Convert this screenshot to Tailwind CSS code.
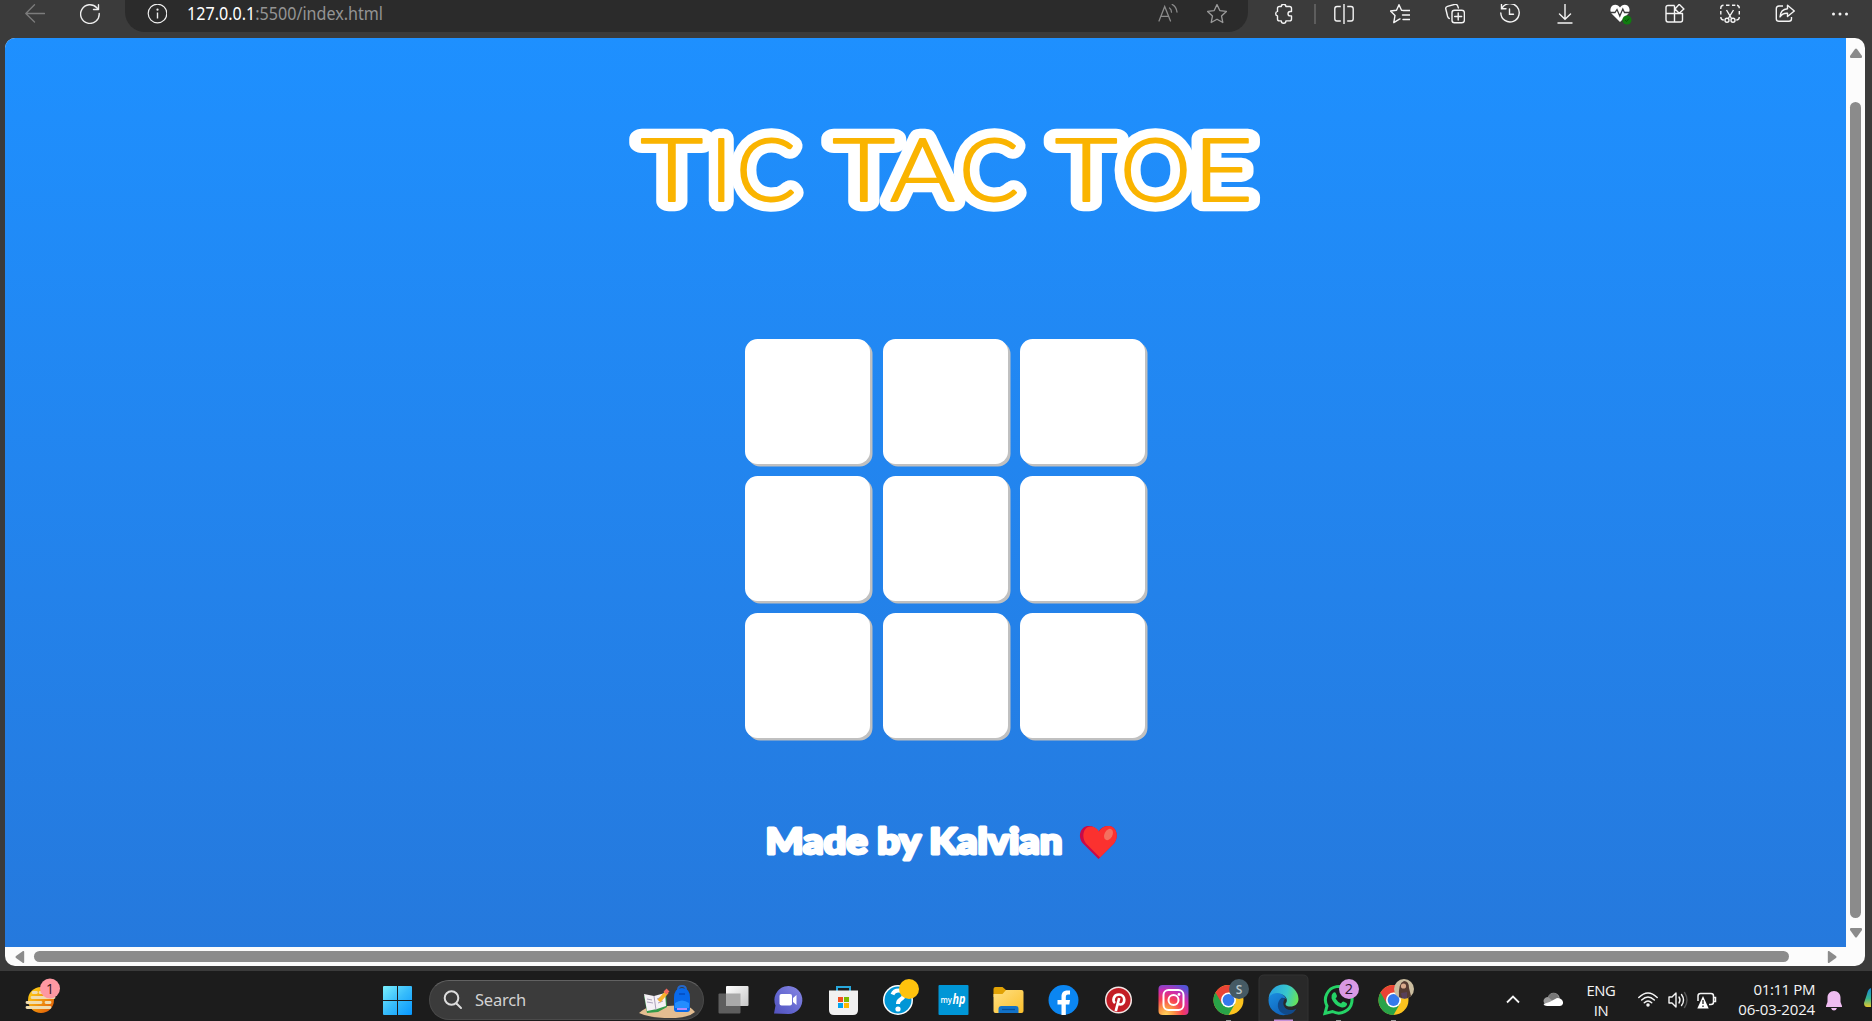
<!DOCTYPE html>
<html lang="en">
<head>
<meta charset="utf-8">
<title>Tic Tac Toe</title>
<script src="https://cdn.jsdelivr.net/npm/@tailwindcss/browser@4"></script>
</head>
<body class="w-[1872px] h-[1021px] overflow-hidden bg-[#3b3b3b] flex flex-col font-['Open_Sans','Noto_Sans',sans-serif]">

<!-- Browser toolbar -->
<header class="h-[38px] shrink-0 flex text-white">
  <div class="w-[125px] h-[28px] flex items-center pl-[25px] gap-[35px]">
    <svg class="w-5 h-5 shrink-0" viewBox="0 0 20 20" fill="none" stroke="#7c7c7c" stroke-width="1.3" stroke-linecap="round" stroke-linejoin="round"><path d="M19.500 9.500H.8M9.500.8L.8 9.500l8.700 8.500"/></svg>
    <svg class="w-5 h-5 shrink-0" viewBox="0 0 20 20" fill="none" stroke="#eee" stroke-width="1.400" stroke-linecap="round" stroke-linejoin="round"><path d="M19.200 9.500A9.300 9.300 0 1 1 16.800 3.800L18.500 5.500M18.500.8V5.500H13.500"/></svg>
  </div>
  <div class="w-[1123px] h-8 bg-[#2b2b2b] rounded-b-[20px] flex items-start pt-1">
    <svg class="w-5 h-5 ml-[22px] shrink-0" viewBox="0 0 20 20" fill="none" stroke="#eee" stroke-width="1.200"><circle cx="10.500" cy="9.500" r="9.300"/><path d="M10.500 8.500v6" stroke-width="1.400"/><circle cx="10.500" cy="5.700" r=".5"/></svg>
    <svg class="w-[200px] h-6 ml-[20px] -mt-[1px] overflow-visible" viewBox="0 0 200 24" font-family="Noto Sans, sans-serif" font-size="17.500"><text x="0" y="17" textLength="196" lengthAdjust="spacingAndGlyphs" fill="#949494"><tspan fill="#fff">127.0.0.1</tspan>:5500/index.html</text></svg>
    <svg class="w-5 h-5 ml-auto shrink-0" viewBox="0 0 20 20" fill="none" stroke="#8b8b8b" stroke-width="1.300" stroke-linecap="round"><path d="M1 17L6.700 2.500 12.500 17M3 12.300h7.500M11.500 4c1.300.8 2 2.500 2 4.200M14.200.5c3 1.500 4.300 4 4.800 7.500"/></svg>
    <svg class="w-5 h-5 ml-[29px] mr-[21px] shrink-0" viewBox="0 0 20 20" fill="none" stroke="#9a9a9a" stroke-width="1.300" stroke-linejoin="round"><path d="M10 .6l2.800 6 6.600.8-4.900 4.500 1.300 6.600-5.800-3.300-5.800 3.300 1.300-6.600L.6 7.400l6.600-.8z"/></svg>
  </div>
  <div class="flex h-[28px] items-center">
    <svg class="w-5 h-5 ml-[26px]" viewBox="0 0 20 20" fill="none" stroke="#f4f4f4" stroke-width="1.400" stroke-linejoin="round"><path d="M5.500 2.500h1.800a2.300 2.300 0 0 1 4.600 0h3.600q2 0 2 2v3h-1.300a2.200 2.200 0 0 0 0 4.400h1.300v3q0 2-2 2h-3.600a2.300 2.300 0 0 1-4.600 0H5.500q-2 0-2-2v-3a2.300 2.300 0 0 1 0-4.500v-3q0-2 2-2z"/></svg>
    <div class="w-[2px] h-5 bg-[#5d5d5d] ml-[20px]"></div>
    <svg class="w-5 h-5 ml-[18px]" viewBox="0 0 20 20" fill="none" stroke="#f4f4f4" stroke-width="1.400"><path d="M10 0v20M6.800 2.500H3Q.8 2.500.8 4.700v10Q.8 17 3 17h3.800M13.200 2.500H17q2.200 0 2.200 2.200v10Q19.200 17 17 17h-3.800"/></svg>
    <div class="flex gap-[35px] ml-[36px]">
      <svg class="w-5 h-5" viewBox="0 0 20 20" fill="none" stroke="#f4f4f4" stroke-width="1.400" stroke-linejoin="round" stroke-linecap="round"><path d="M12.500 6.400l-1-.2L9 .7l-2.500 5.500-6 .8 4.500 4.400-1.200 7.200L9 15.400l1-.5M13 6.500h7M12.500 11H20M13 15.500h7"/></svg>
      <svg class="w-5 h-5" viewBox="0 0 20 20" fill="none" stroke="#f4f4f4" stroke-width="1.400" stroke-linecap="round"><path d="M4.300 14.500C3 14 2.800 13 2.500 12L.8 5Q.3 3 2.500 2.300l7.500-2Q12 0 12.700 2l.7 2M10 .4"/><rect x="7" y="6.200" width="12.400" height="12.600" rx="2.500"/><path d="M13.200 9v7M9.700 12.500h7"/></svg>
      <svg class="w-5 h-5" viewBox="0 0 20 20" fill="none" stroke="#f4f4f4" stroke-width="1.400" stroke-linecap="round"><path d="M2 4.200A9.200 9.200 0 1 1 .8 9M1.500.3v4.500H6M9.500 5v5.300h4"/></svg>
      <svg class="w-5 h-5" viewBox="0 0 20 20" fill="none" stroke="#f4f4f4" stroke-width="1.400" stroke-linecap="round"><path d="M10 .3V15M4.500 10l5.500 5.300L15.500 10M3 19h14"/></svg>
      <svg class="w-5 h-5 overflow-visible" viewBox="0 0 20 20" fill="none"><path d="M10 18L1.500 9.500C-1 6 1 .8 5.300.8c2 0 3.700 1.200 4.700 2.700C11 2 12.700.8 14.700.8 19 .8 21 6 18.500 9.500z" fill="#fff"/><path d="M0 8.500h5l2-3 2.800 6.500 3-7 1.700 3.500H20" stroke="#3b3b3b" stroke-width="1.300"/><circle cx="17" cy="16" r="4.600" fill="#107c10"/><path d="M15 16l1.500 1.500 2.500-3" stroke="#0b4c0b" stroke-width="1"/></svg>
      <svg class="w-5 h-5" viewBox="0 0 20 20" fill="none" stroke="#f4f4f4" stroke-width="1.400" stroke-linejoin="round"><path d="M9.500 1.500H3Q1 1.500 1 3.500v12Q1 18 3 18h12.500q2 0 2-2v-6.500H1M9.500 1.500V18M14.200.3l4.700 4.700-4.700 4.200L10 5z"/></svg>
      <svg class="w-5 h-5" viewBox="0 0 20 20" fill="none" stroke="#f4f4f4" stroke-width="1.400"><path d="M.8 5V4Q.8 1.300 3.500 1.300M6 1.300h3.500M12 1.300h3.300M17 1.300q2.300.4 2.300 3M19.300 7v3.500M19.300 13q0 3-3 3M.8 7v3.500M.8 13q0 3 3 3M6.500 6l5.300 9M13.500 6L8 15"/><circle cx="7" cy="16.300" r="2"/><circle cx="13" cy="16.300" r="2"/></svg>
      <svg class="w-5 h-5" viewBox="0 0 20 20" fill="none" stroke="#f4f4f4" stroke-width="1.400" stroke-linejoin="round"><path d="M8 2H4Q1.300 2 1.300 4.700v10q0 2.600 2.700 2.600h10q2.500 0 2.500-2.500V13M12.500 1.300L19.300 7l-6.800 5.500V9.300C8.500 9 6.500 10.500 5 13c.3-5 3-8 7.500-8.300z"/></svg>
      <svg class="w-5 h-5" viewBox="0 0 20 20" fill="#f4f4f4"><circle cx="3.500" cy="10" r="1.500"/><circle cx="10" cy="10" r="1.500"/><circle cx="16.500" cy="10" r="1.500"/></svg>
    </div>
  </div>
</header>

<!-- Page viewport with scrollbars -->
<main class="ml-[5px] w-[1860px] h-[928px] shrink-0 rounded-[10px] overflow-hidden bg-[#fcfcfc] grid grid-cols-[1841px_19px] grid-rows-[909px_19px]">
  <section class="bg-linear-to-b from-[#1e90ff] to-[#2579dd] flex flex-col items-center pl-[40px] overflow-hidden">
    <svg class="w-[660px] h-[120px] mt-[72px] shrink-0" viewBox="0 0 660 120" font-family="Lato, sans-serif" font-weight="300" font-size="86.500">
      <defs>
        <g id="title" stroke-linejoin="round">
          <text x="24.500" y="91" textLength="62.500" lengthAdjust="spacingAndGlyphs">T</text>
          <text x="94" y="91">I</text>
          <text x="120" y="91" textLength="60" lengthAdjust="spacingAndGlyphs">C</text>
          <text x="216.500" y="91" textLength="62.500" lengthAdjust="spacingAndGlyphs">T</text>
          <text x="274" y="91" textLength="65" lengthAdjust="spacingAndGlyphs">A</text>
          <text x="343" y="91" textLength="60" lengthAdjust="spacingAndGlyphs">C</text>
          <text x="439" y="91" textLength="62.500" lengthAdjust="spacingAndGlyphs">T</text>
          <text x="504" y="91" textLength="71" lengthAdjust="spacingAndGlyphs">O</text>
          <text x="577" y="91" textLength="60" lengthAdjust="spacingAndGlyphs">E</text>
        </g>
      </defs>
      <use href="#title" fill="#fff" stroke="#fff" stroke-width="20.500"/>
      <use href="#title" fill="#fab400" stroke="#fab400" stroke-width="1.800"/>
    </svg>
    <div class="grid grid-cols-3 gap-x-[12.400px] gap-y-[12.200px] mt-[109px] mr-[1px]">
      <div class="size-[125px] rounded-[12.500px] bg-white shadow-[2.500px_2.500px_0_#c0c0c0]"></div>
      <div class="size-[125px] rounded-[12.500px] bg-white shadow-[2.500px_2.500px_0_#c0c0c0]"></div>
      <div class="size-[125px] rounded-[12.500px] bg-white shadow-[2.500px_2.500px_0_#c0c0c0]"></div>
      <div class="size-[125px] rounded-[12.500px] bg-white shadow-[2.500px_2.500px_0_#c0c0c0]"></div>
      <div class="size-[125px] rounded-[12.500px] bg-white shadow-[2.500px_2.500px_0_#c0c0c0]"></div>
      <div class="size-[125px] rounded-[12.500px] bg-white shadow-[2.500px_2.500px_0_#c0c0c0]"></div>
      <div class="size-[125px] rounded-[12.500px] bg-white shadow-[2.500px_2.500px_0_#c0c0c0]"></div>
      <div class="size-[125px] rounded-[12.500px] bg-white shadow-[2.500px_2.500px_0_#c0c0c0]"></div>
      <div class="size-[125px] rounded-[12.500px] bg-white shadow-[2.500px_2.500px_0_#c0c0c0]"></div>
    </div>
    <svg class="w-[380px] h-[60px] mt-[76px] shrink-0" viewBox="0 0 380 60" fill="#fff" stroke="#fff" stroke-linejoin="round">
      <text x="9.500" y="39.500" font-family="Lato, sans-serif" font-weight="900" font-size="36" stroke-width="3" textLength="297" lengthAdjust="spacingAndGlyphs">Made by Kalvian</text>
      <g stroke="none" transform="translate(4 -1)"><path d="M338.500 46L323 30.500C317 23.500 320.500 13 328.500 13c4.500 0 8 2 10 5.500 2-3.500 5.500-5.500 10-5.500 8 0 11 10.500 5.500 17.500z" fill="#c90a48"/><path d="M340 44.500L327 31.500C320.500 24.500 323.500 13.500 330.500 13.500c4 0 7 2 8.500 5 2-3.500 5-5.500 9.500-5.500 8 0 11 10.500 5.500 17.500z" fill="#fb312f"/><ellipse cx="348.500" cy="21.500" rx="4" ry="6" transform="rotate(27 348.500 21.500)" fill="#f4705f"/></g>
    </svg>
  </section>
  <div class="flex flex-col items-center">
    <svg class="w-3 h-[10px] mt-[10px] shrink-0" viewBox="0 0 12 10" fill="#8b8b8b"><path d="M5 1q1-1 2 0l5 7q.2 2-1 2H1q-1.200 0-1-2z"/></svg>
    <div class="w-[11px] h-[816px] rounded-full bg-[#8b8b8b] mt-[44px] shrink-0"></div>
    <svg class="w-3 h-[10px] mt-[10px] shrink-0" viewBox="0 0 12 10" fill="#8b8b8b"><path d="M5 9q1 1 2 0l5-7q.2-2-1-2H1Q-.2 0 0 2z"/></svg>
  </div>
  <div class="flex items-center">
    <svg class="w-[10px] h-3 ml-[10px] shrink-0" viewBox="0 0 10 12" fill="#8b8b8b"><path d="M1 5q-1 1 0 2l7 5q1.200.2 1.200-1V1q0-1.200-1.200-1z"/></svg>
    <div class="w-[1755px] h-[11px] rounded-full bg-[#8b8b8b] ml-[9px] shrink-0"></div>
    <svg class="w-[10px] h-3 ml-[38px] shrink-0" viewBox="0 0 10 12" fill="#8b8b8b"><path d="M9 5q1 1 0 2l-7 5Q.8 12.200.8 11V1Q.8-.2 2 0z"/></svg>
  </div>
</main>

<!-- Taskbar -->
<footer class="mt-[5px] h-[50px] shrink-0 bg-[#1c1c1c] flex items-start text-[#f4f4f4]">
  <svg class="w-[370px] h-[50px] shrink-0" viewBox="0 0 370 50">
    <defs><linearGradient id="sun" x1="0" y1="0" x2="1" y2="1"><stop offset=".2" stop-color="#fcc111"/><stop offset="1" stop-color="#df5106"/></linearGradient></defs>
    <circle cx="41" cy="29" r="13" fill="url(#sun)"/>
    <path d="M33 21.500h3.500M40 21.500h3M32 26.500h22M27 31.500h14M46 31.500h4M27 36.500h23" stroke="#f0dcae" stroke-width="2.800" stroke-linecap="round"/>
    <circle cx="50" cy="17.500" r="10" fill="#fe98a2"/>
    <text x="50" y="23" text-anchor="middle" font-family="Open Sans, sans-serif" font-size="14" fill="#34161a">1</text>
  </svg>
  <svg class="w-[55px] h-[50px] shrink-0" viewBox="0 0 55 50">
    <defs><linearGradient id="win" gradientUnits="userSpaceOnUse" x1="13" y1="15" x2="42" y2="44"><stop stop-color="#79effc"/><stop offset=".5" stop-color="#37bcfb"/><stop offset="1" stop-color="#0797ff"/></linearGradient></defs>
    <path d="M13 16q0-1 1-1h13v14H13zM28 15h13q1 0 1 1v13H28zM13 30h14v14H14q-1 0-1-1zM28 30h14v13q0 1-1 1H28z" fill="url(#win)"/>
  </svg>
  <div class="ml-[4px] mt-[9px] w-[275px] h-[40px] rounded-full bg-[#3b3b3b] border border-[#4a4a4a] border-t-[#626262] flex items-center shrink-0">
    <svg class="w-5 h-5 ml-[13px]" viewBox="0 0 20 20" fill="none" stroke="#ddd" stroke-width="2" stroke-linecap="round"><circle cx="8.500" cy="8" r="6.800"/><path d="M13.500 13.500l4.500 4.500"/></svg>
    <span class="ml-[12px] text-[16.500px] leading-5 tracking-[-0.2px] text-[#d2d2d2] font-['Noto_Sans',sans-serif]">Search</span>
    <svg class="w-[60px] h-[38px] ml-auto mr-[5px]" viewBox="0 0 60 38">
      <path d="M1 32q6-6 14-6l30-2q6 0 12 7-7 6-24 6-22 0-32-5z" fill="#e3bd91"/>
      <path d="M6 15l12 1 10-4 1 14-9 5-11 1z" fill="#349b4a"/><path d="M6 13l10 2 11-3 1 13-9 3-10 2z" fill="#f5f1f6"/><path d="M16 15l2 14M9 18l5 1M9 21l6 1M19 18l5-2M20 22l5-2" stroke="#aaa1bb"/>
      <path d="M21 20l8-9" stroke="#f7b22b" stroke-width="4"/><path d="M27 12l3-3" stroke="#f4695d" stroke-width="4"/>
      <path d="M40 9q0-4 4-4t4 4" fill="none" stroke="#2567c8" stroke-width="2"/><path d="M36 17q0-10 8-10t8 10v11q0 3-3 3H39q-3 0-3-3z" fill="#0869eb"/><path d="M37 22q7-5 14 0v5H37z" fill="#238dff"/><path d="M39 28h10" stroke="#b18bff" stroke-width="2"/><path d="M41 13h6" stroke="#003da6"/>
    </svg>
  </div>
  <div class="flex ml-[2px] shrink-0">
    <!-- task view -->
    <svg class="w-[55px] h-[50px]" viewBox="0 0 55 50"><defs><linearGradient id="tv" x1="0" y1="0" x2="1" y2="1"><stop stop-color="#fff"/><stop offset="1" stop-color="#c7c7c7"/></linearGradient></defs><rect x="12.500" y="22.500" width="22" height="20" rx="1" fill="#5e5e5e"/><rect x="20" y="15" width="22.500" height="20" rx="1" fill="url(#tv)"/><path d="M20 22.500h14.500V35H20z" fill="#a9a9a9"/></svg>
    <!-- chat -->
    <svg class="w-[55px] h-[50px]" viewBox="0 0 55 50"><defs><linearGradient id="chat" x1="1" y1="0" x2="0" y2="1"><stop stop-color="#8988e4"/><stop offset=".6" stop-color="#6266cf"/><stop offset="1" stop-color="#5352bd"/></linearGradient></defs><path d="M13 42.500l1.500-8A14 14 0 1 1 27.500 43z" fill="url(#chat)"/><rect x="18.500" y="23" width="12.500" height="11.500" rx="2" fill="#fff"/><path d="M32 27l3.500-3v10L32 31z" fill="#fff"/></svg>
    <!-- store -->
    <svg class="w-[55px] h-[50px]" viewBox="0 0 55 50"><path d="M21 21v-5h13v5" fill="none" stroke="#28a8dc" stroke-width="2"/><path d="M13 19.500h29V39q0 5-5 5H18q-5 0-5-5z" fill="#f1f1f1"/><path d="M22 26h5v5h-5z" fill="#f25022"/><path d="M28 26h5v5h-5z" fill="#7fba00"/><path d="M22 32h5v5h-5z" fill="#00a4ef"/><path d="M28 32h5v5h-5z" fill="#ffb900"/></svg>
    <!-- support assistant -->
    <svg class="w-[55px] h-[50px]" viewBox="0 0 55 50"><circle cx="27" cy="29" r="15" fill="#fff"/><circle cx="27" cy="29" r="13.500" fill="#0096d6"/><path d="M21.500 23.500q1.500-4 6-4 5.500 0 5.500 4 0 3-3.500 5-2.500 1.500-2.500 4.500" fill="none" stroke="#fff" stroke-width="4"/><circle cx="27" cy="38" r="2.600" fill="#fff"/><circle cx="38" cy="18" r="10" fill="#ffc20d"/></svg>
    <!-- myHP -->
    <svg class="w-[55px] h-[50px]" viewBox="0 0 55 50"><rect x="12.500" y="14" width="30" height="30" rx="1" fill="#0096d6"/><text x="14.500" y="32" font-family="Open Sans, sans-serif" font-size="8.500" font-weight="600" textLength="11.500" lengthAdjust="spacingAndGlyphs" fill="#fff">my</text><text x="26.500" y="32.500" font-family="Open Sans, sans-serif" font-style="italic" font-size="14" font-weight="700" textLength="13" lengthAdjust="spacingAndGlyphs" fill="#fff">hp</text></svg>
    <!-- explorer -->
    <svg class="w-[55px] h-[50px]" viewBox="0 0 55 50"><defs><linearGradient id="fold" x1="0" y1="0" x2="1" y2="1"><stop stop-color="#ffe083"/><stop offset="1" stop-color="#fbbf2b"/></linearGradient></defs><path d="M12.500 26v-8q0-2 2-2h7l4 3.500V26z" fill="#e2a204"/><path d="M12.500 23h9l3.500-4h15.500q2 0 2 2v19q0 2-2 2h-26q-2 0-2-2z" fill="url(#fold)"/><path d="M17.500 42v-4q0-3 3-3h14q3 0 3 3v4z" fill="#1272c8"/><path d="M21 38.500h13" stroke="#07509a" stroke-width="1.300"/></svg>
    <!-- facebook -->
    <svg class="w-[55px] h-[50px]" viewBox="0 0 55 50"><circle cx="27.500" cy="29" r="15" fill="#0b86f2"/><path d="M25.500 44v-10.500h-4v-4.500h4v-3.500c0-4 2.300-6 5.800-6h2.700v4h-2q-2.200 0-2.200 2.200V29h4.200l-.7 4.500h-3.500V44z" fill="#fff"/></svg>
    <!-- pinterest -->
    <svg class="w-[55px] h-[50px]" viewBox="0 0 55 50"><circle cx="27.500" cy="29" r="12.800" fill="#c31c25" stroke="#f2e6e5" stroke-width="1.500"/><path d="M24 32c-2.500-2-2-8.500 4-8.500 7 0 6.500 10 1.500 10-1.500 0-2.500-.8-2.800-1.800M28.200 27l-3.400 13" fill="none" stroke="#fff" stroke-width="2.700"/></svg>
    <!-- instagram -->
    <svg class="w-[55px] h-[50px]" viewBox="0 0 55 50"><defs><radialGradient id="ig" cx=".25" cy="1" r="1.100"><stop stop-color="#ffd65b"/><stop offset=".25" stop-color="#fc9445"/><stop offset=".5" stop-color="#f63d57"/><stop offset=".75" stop-color="#cc2db0"/><stop offset="1" stop-color="#5653d6"/></radialGradient></defs><rect x="12.500" y="14" width="30" height="30" rx="4" fill="url(#ig)"/><g fill="none" stroke="#fff" stroke-width="2"><rect x="17.500" y="19" width="20" height="20" rx="5"/><circle cx="27.500" cy="29" r="5"/></g><circle cx="33" cy="23.500" r="1.400" fill="#fff"/></svg>
    <!-- chrome, profile S -->
    <svg class="w-[55px] h-[50px]" viewBox="0 0 55 50">
      <g id="chrome"><circle cx="27.500" cy="29" r="15" fill="#fcc31e"/><path d="M14.500 21.500A15 15 0 0 0 27.500 44l6.500-11.200-6.500-3.800z" fill="#28a348"/><path d="M27.500 21.500h13a15 15 0 0 0-26 0L21 32.700z" fill="#ea4335"/><circle cx="27.500" cy="29" r="7.500" fill="#fff"/><circle cx="27.500" cy="29" r="5.900" fill="#3579ec"/></g>
      <circle cx="38" cy="18" r="10" fill="#455a64"/><text x="38" y="22.500" text-anchor="middle" font-family="Open Sans, sans-serif" font-size="12" font-weight="600" fill="#bcc6ca">S</text><path d="M25 49.500h5" stroke="#999" stroke-width="1"/>
    </svg>
    <!-- edge (active) -->
    <svg class="w-[55px] h-[50px]" viewBox="0 0 55 50">
      <defs><linearGradient id="e1" x1="0" y1=".3" x2="1" y2=".5"><stop stop-color="#279fe2"/><stop offset=".6" stop-color="#38c7cd"/><stop offset="1" stop-color="#66e35a"/></linearGradient><linearGradient id="e2" x1="0" y1="0" x2=".6" y2="1"><stop stop-color="#1a8de0"/><stop offset="1" stop-color="#1063bb"/></linearGradient></defs>
      <path d="M3 50V9q0-5 5-5h39q5 0 5 5v41z" fill="#292929" stroke="#333"/>
      <path d="M12.600 27A15 15 0 0 1 42.500 28c0 5-4 7.500-8 7.500-3.500 0-6-1.500-4.500-3.500 2-3 .5-7-4-8.500-5-1.500-11 0-13.400 3.500z" fill="url(#e1)"/>
      <path d="M12.500 29c0-6 8-8.500 13-6 2.500 1 4 3 4.500 5-3-2-7 1-6 6 1 6 6 9 11 8A15 15 0 0 1 12.500 29z" fill="url(#e2)"/>
      <path d="M26 26.500c-6 4-6 14 3 17 5 1 9-1.500 11.500-6-5 3-11 1.500-12.500-2.500-1.500-3 0-6 1-7z" fill="#114a8b"/>
      <path d="M18 49.500h19" stroke="#c391d8" stroke-width="2"/>
    </svg>
    <!-- whatsapp -->
    <svg class="w-[55px] h-[50px]" viewBox="0 0 55 50"><path d="M14 42.500l2-7.500a13.300 13.300 0 1 1 5.500 5.500z" fill="none" stroke="#25d366" stroke-width="3"/><path d="M22 22q2-1.500 3 .5l1 2.500q0 1-1.500 2.500 2 3.500 5.500 5 1.500-2.500 3-1.800l2.500 1.300q1 .7.300 2.200-1.800 3-5.800 2-7-2-9.500-9-.5-3.500 1.500-5.200z" fill="#25d366"/><circle cx="38" cy="18" r="10" fill="#d999e4"/><text x="38" y="23.200" text-anchor="middle" font-family="Open Sans, sans-serif" font-size="14.500" fill="#2b152e">2</text><path d="M25 49.500h5" stroke="#999"/></svg>
    <!-- chrome, photo profile -->
    <svg class="w-[55px] h-[50px]" viewBox="0 0 55 50"><use href="#chrome"/><circle cx="38" cy="18" r="10" fill="#cbbd9f"/><path d="M33 26q-1-14 5-16 5 0 5 7l2 8q-5 5-12 1z" fill="#553b32"/><circle cx="37.500" cy="15" r="2.600" fill="#d9a98b"/><path d="M35 22l6-1v6h-5z" fill="#57405a"/><path d="M25 49.500h5" stroke="#999"/></svg>
  </div>
  <!-- system tray -->
  <div class="flex items-start ml-[85px]">
    <svg class="w-[14px] h-[9px] mt-[24px]" viewBox="0 0 14 9" fill="none" stroke="#f4f4f4" stroke-width="1.800"><path d="M1 7.500l6-6 6 6"/></svg>
    <svg class="w-5 h-[15px] mt-[21px] ml-[23px]" viewBox="0 0 20 15"><path d="M2 12q-3-3 0-6 1.500-1 3-1Q6.500 1 10.500.8 15 1 16.500 5v5z" fill="#9b9b9b"/><path d="M5 5Q7 1 10.500 1t5.500 5l-6 3z" fill="#777"/><path d="M2 12.500l12-6.500q5 0 6 4 .5 3.500-3 4H4q-3 0-3.500-2l6-2z" fill="#fff"/></svg>
    <div class="w-[36px] ml-[20px] mt-[9px] text-center text-[14.800px] leading-5 tracking-[-0.4px]">ENG<br>IN</div>
    <svg class="w-5 h-[15px] mt-[21px] ml-[19px]" viewBox="0 0 20 15" fill="none" stroke="#f4f4f4" stroke-width="1.500" stroke-linecap="round"><path d="M.8 5.500q9.200-9 18.400 0M3.700 8q6.300-6 12.600 0M6.300 10.800q3.700-3.500 7.400 0"/><circle cx="10" cy="13" r="1" fill="#fff"/></svg>
    <svg class="w-5 h-5 mt-[19px] ml-[10px]" viewBox="0 0 20 20" fill="none" stroke="#f4f4f4" stroke-width="1.400" stroke-linecap="round" stroke-linejoin="round"><path d="M1 7h3l4-4v14l-4-4H1zM11 7q2 3 0 6M13.500 4.500q4 5.500 0 11"/><path d="M16.500 2.500q5 7.500 0 15" stroke="#555"/></svg>
    <svg class="w-[21px] h-5 mt-[20px] ml-[9px]" viewBox="0 0 21 20" fill="none" stroke="#f4f4f4" stroke-width="1.500"><path d="M1 10V5q0-2.500 2.500-2.500H14q2.500 0 2.500 2.500v6q0 2.500-2.500 2.500h-2M17 6.500h1.500v4H17" /><path d="M6 5L.3 17.500h11.400z" fill="#fff" stroke="none"/><path d="M6 9v4M6 14.500V16" stroke="#222" stroke-width="1.300"/></svg>
    <div class="w-[80px] ml-[17px] mt-[8px] flex flex-col items-end text-[15px] leading-5 tracking-[-0.15px] whitespace-nowrap"><span class="tracking-[-0.4px]">01:11 PM</span><span>06-03-2024</span></div>
    <svg class="w-4 h-5 mt-[20px] ml-[11px]" viewBox="0 0 16 20" fill="#efbcf1"><path d="M8 0c4 0 6.500 3 6.500 6.500V11l1.500 4v1H0v-1l1.500-4V6.500C1.500 3 4 0 8 0zM5 17h6q-1 2.500-3 2.500T5 17z"/></svg>
    <svg class="w-[7px] h-5 mt-[17px] ml-[22px]" viewBox="0 0 7 20"><defs><linearGradient id="cp" x1="0" y1="0" x2="0" y2="1"><stop stop-color="#1687d9"/><stop offset=".55" stop-color="#36b58f"/><stop offset="1" stop-color="#e6c72b"/></linearGradient></defs><path d="M7 0Q4 1 3 6L0 15q0 4 3 4h4z" fill="url(#cp)"/></svg>
  </div>
</footer>
</body>
</html>
